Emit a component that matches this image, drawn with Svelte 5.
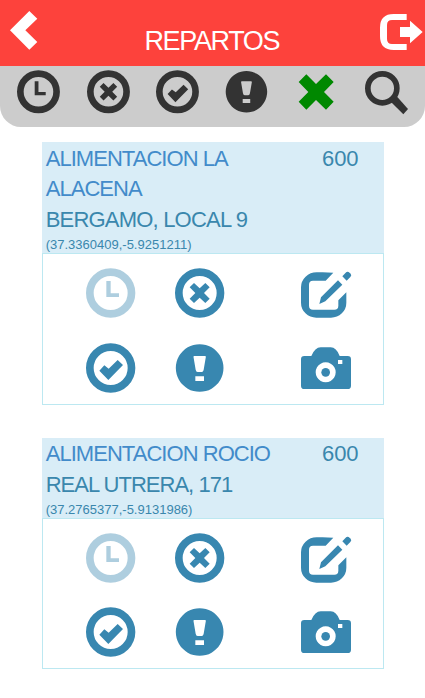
<script>
  const deliveries = [
    { name: ['ALIMENTACION LA', 'ALACENA'], address: 'BERGAMO, LOCAL 9', coords: '(37.3360409,-5.9251211)', code: '600' },
    { name: ['ALIMENTACION ROCIO'], address: 'REAL UTRERA, 171', coords: '(37.2765377,-5.9131986)', code: '600' }
  ];
  const filters = ['clock', 'cancel', 'ok', 'alert', 'remove', 'search'];
  const actions = ['clock', 'cancel', 'edit', 'ok', 'alert', 'camera'];
</script>

{#snippet icon(name)}
  <svg class="icon {name}" viewBox="0 0 150 150" aria-hidden="true">
    {#if name === 'clock' || name === 'cancel' || name === 'ok'}
      <circle cx="74" cy="75" r="62.5" fill="none" stroke="currentColor" stroke-width="23" />
    {/if}
    {#if name === 'clock'}
      <path d="M61 39H74V76H99V87H61Z" />
    {:else if name === 'cancel'}
      <path d="M57 45L74 61L91 45L104 58L87 75L104 92L91 105L74 89L57 105L44 92L61 75L44 58Z" />
    {:else if name === 'ok'}
      <path d="M40 83L55 67L68 77L95 51L111 66L67 111Z" />
    {:else if name === 'alert'}
      <path fill-rule="evenodd" d="M74 3.500A71.500 71.500 0 1 1 73.900 3.500ZM58 39Q55 39 55.500 42L62 80Q63 87 68 87H80Q85 87 86 80L92.500 42Q93 39 90 39ZM61 100V114H87V100Z" />
    {:else if name === 'edit'}
      <path d="M97 14Q75 12 47 13A47 45 0 0 0 0 58V104A46 45 0 0 0 46 149H90A46 45 0 0 0 136 104V73L112 97V113Q112 125 100 125H36Q24 125 24 113V50Q24 38 36 38H74Z" />
      <path d="M55 108L60 88L111 37L124 50L73 100ZM124 25L134 14Q138 9 143 12L149 17Q153 22 148 27L137 38Z" />
    {:else if name === 'camera'}
      <path fill-rule="evenodd" d="M10 39H31Q42 13 59 13H89Q106 13 116 39H140Q150 39 150 49V128Q150 138 140 138H10Q0 138 0 128V49Q0 39 10 39ZM74 58A30 30 0 1 0 74.100 58ZM111 51V63H124V51Z" />
      <circle cx="74" cy="88" r="13" />
    {:else if name === 'remove'}
      <path d="M46 22L75 51L105 22L128 45L99 75L128 104L105 128L75 99L46 128L23 104L52 75L23 45Z" />
    {:else if name === 'search'}
      <circle cx="64" cy="64" r="43.5" fill="none" stroke="currentColor" stroke-width="17" />
      <path d="M90 105L107 88L141 126L127 142Z" />
    {/if}
  </svg>
{/snippet}

<div class="app">
  <header>
    <svg class="back" viewBox="0 0 82 116" aria-hidden="true"><path d="M58 0L82 23L46 58L82 93L58 116L0 58Z" /></svg>
    <h1>REPARTOS</h1>
    <svg class="exit" viewBox="0 0 128 108" aria-hidden="true">
      <path d="M80 0H41Q0 0 0 41V67Q0 108 41 108H80V90H36Q21 90 21 75V33Q21 18 36 18H80ZM60 39H90V20L128 54L90 88V69H60Z" />
    </svg>
  </header>
  <nav>
    {#each filters as f}<div class="filter">{@render icon(f)}</div>{/each}
  </nav>
  <main>
    {#each deliveries as d}
      <article>
        <div class="head">
          <div class="info">
            <div class="name">{#each d.name as part}<div>{part}</div>{/each}</div>
            <div class="address">{d.address}</div>
            <div class="coords">{d.coords}</div>
          </div>
          <div class="code">{d.code}</div>
        </div>
        <div class="actions">
          {#each actions as a}<div class="action">{@render icon(a)}</div>{/each}
        </div>
      </article>
    {/each}
  </main>
</div>

<style>
  :global(body) { background: #fff; }
  .app { width: 425px; height: 698px; overflow: hidden; background: #fff; font-family: "Liberation Sans", Arial, sans-serif; }
  svg { display: block; fill: currentColor; overflow: visible; }
  header { height: 66px; box-sizing: border-box; padding: 11px 2.300px 0 10.300px; display: flex; justify-content: space-between; align-items: flex-start; background: #fd423c; color: #fff; }
  .back { width: 27.300px; height: 38.700px; }
  .exit { width: 42.700px; height: 36px; margin-top: 3px; }
  h1 { margin: 15px 0 0 6px; font-size: 27px; line-height: 31px; font-weight: 400; letter-spacing: -1.350px; }
  nav { height: 61px; box-sizing: border-box; padding: 4px 3px 0 4px; display: grid; grid-template-columns: repeat(3, 69.500px) 68.500px 70px 69.500px; justify-content: start; background: #ccc; color: #333; border-radius: 0 0 21px 21px; }
  .filter { display: flex; justify-content: center; }
  .filter .icon { width: 43.500px; height: 43.500px; }
  .filter .remove { color: #080; }
  .filter .remove, .filter .search { width: 50px; height: 50px; margin-top: -3.500px; }
  main { padding: 15px 41px 0 42px; }
  article { margin-bottom: 33.400px; }
  .head { display: flex; justify-content: space-between; box-sizing: border-box; padding: 1.500px 25.500px 0 3.700px; background: #d9edf7; color: #3a87ad; font-size: 22px; line-height: 30px; }
  .name { color: #428bca; letter-spacing: -.960px; }
  .name div { height: 30.500px; white-space: nowrap; }
  .name div + div { height: 30.600px; }
  .address { height: 30.200px; letter-spacing: -.800px; }
  article:last-child .address { letter-spacing: -.980px; }
  .coords { height: 18.200px; font-size: 13px; line-height: 20px; }
  .code { letter-spacing: -.100px; }
  .actions { height: 151.600px; box-sizing: border-box; padding: 14px 0 0 43px; border: 1px solid #bce8f1; display: grid; grid-template-columns: 89px 126px 50px; grid-auto-rows: 75px; color: #3887b0; }
  article:last-child .actions { height: 150.600px; padding-top: 13.500px; grid-auto-rows: 74.500px; }
  .action .icon { width: 50px; height: 50px; }
  .action .clock { opacity: .4; }
</style>
